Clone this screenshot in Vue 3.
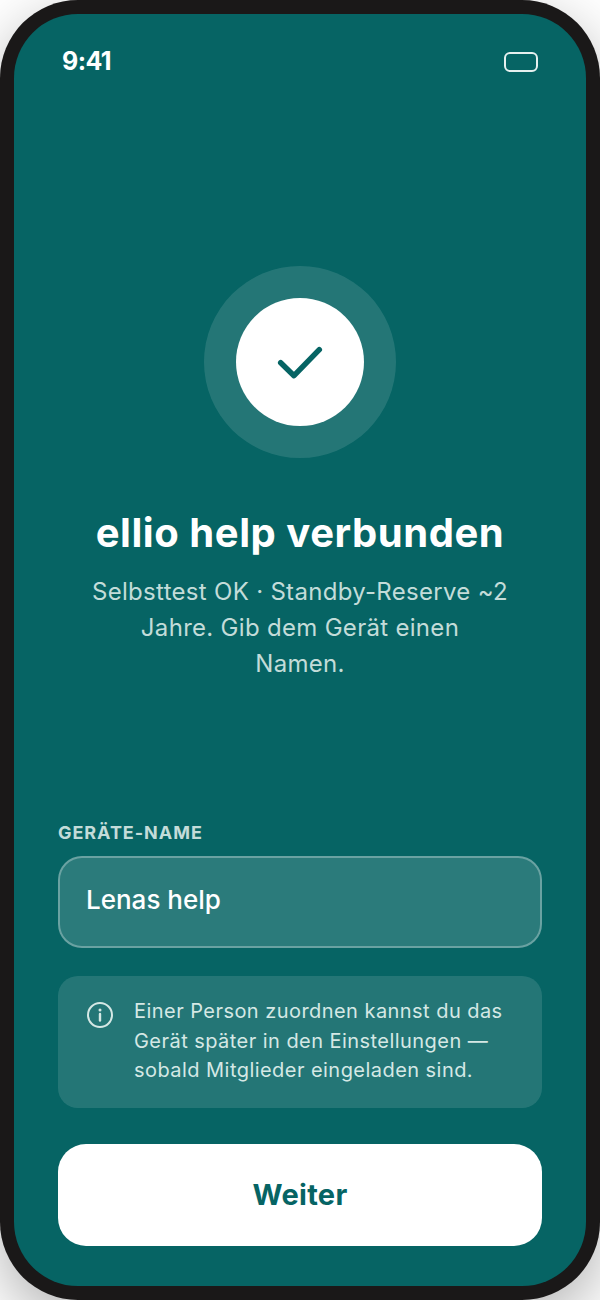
<script setup>
</script>

<template>
  <div class="phone">
    <main class="screen">
      <header class="status">
        <span class="time">9:41</span>
        <span class="battery"></span>
      </header>

      <section class="hero">
        <div class="ring">
          <div class="disc">
            <svg class="check" viewBox="0 0 48 48" width="48" height="48" fill="none">
              <path d="M4.7 24.7 18 37.7 43.3 11.7" stroke="#066464" stroke-width="5.5" stroke-linecap="round" stroke-linejoin="round"/>
            </svg>
          </div>
        </div>
        <h1 class="title">ellio help verbunden</h1>
        <p class="sub">Selbsttest OK · Standby-Reserve ~2<br>Jahre. Gib dem Gerät einen<br>Namen.</p>
      </section>

      <section class="form">
        <label class="label">GERÄTE-NAME</label>
        <div class="input">Lenas help</div>
        <div class="info">
          <svg class="info-icon" viewBox="0 0 26 26" width="26" height="26" fill="none">
            <circle cx="13" cy="13" r="12" stroke="#d5e8e5" stroke-width="2"/>
            <path d="M13 12v6.5" stroke="#d5e8e5" stroke-width="2.4" stroke-linecap="round"/>
            <circle cx="13" cy="8" r="1.5" fill="#d5e8e5"/>
          </svg>
          <p class="info-text">Einer Person zuordnen kannst du das<br>Gerät später in den Einstellungen —<br>sobald Mitglieder eingeladen sind.</p>
        </div>
        <button class="btn">Weiter</button>
      </section>
    </main>
  </div>
</template>

<style>
html, body { margin: 0; background: #fff; }
</style>

<style scoped>
.phone {
  box-sizing: border-box;
  width: 600px;
  height: 1300px;
  padding: 14px;
  background: #1a1818;
  border-radius: 78px;
  box-shadow: 0 20px 60px rgba(0, 0, 0, 0.3);
  font-family: Inter, "Liberation Sans", sans-serif;
}
.screen {
  height: 100%;
  background: #066464;
  border-radius: 64px;
  display: flex;
  flex-direction: column;
  padding: 34px 44px 40px;
  box-sizing: border-box;
  overflow: hidden;
}
.status {
  display: flex;
  justify-content: space-between;
  align-items: center;
  height: 26px;
  padding: 0 4px;
}
.time {
  color: #fff;
  font-size: 25px;
  font-weight: 700;
  line-height: 26px;
  letter-spacing: -0.6px;
}
.battery {
  box-sizing: border-box;
  width: 34px;
  height: 20px;
  margin-top: 2px;
  border: 2px solid #e6f0ef;
  border-radius: 6px;
}
.hero {
  margin-top: 192px;
  display: flex;
  flex-direction: column;
  align-items: center;
  text-align: center;
}
.ring {
  width: 192px;
  height: 192px;
  border-radius: 50%;
  background: rgba(255, 255, 255, 0.12);
  display: flex;
  align-items: center;
  justify-content: center;
}
.disc {
  width: 128px;
  height: 128px;
  border-radius: 50%;
  background: #fff;
  display: flex;
  align-items: center;
  justify-content: center;
}
.title {
  margin: 49px 0 0;
  color: #fff;
  font-size: 40px;
  font-weight: 700;
  line-height: 52px;
  letter-spacing: 0.55px;
}
.sub {
  margin: 15px 0 0;
  color: #c3dcd9;
  font-size: 24px;
  font-weight: 400;
  line-height: 36px;
  letter-spacing: 0.3px;
}
.form {
  margin-top: auto;
  display: flex;
  flex-direction: column;
}
.label {
  color: #c3dcd9;
  font-size: 18px;
  font-weight: 700;
  line-height: 24px;
  letter-spacing: 0.95px;
}
.input {
  box-sizing: border-box;
  margin-top: 11px;
  height: 92px;
  padding: 0 26px 5px;
  display: flex;
  align-items: center;
  border: 2px solid rgba(255, 255, 255, 0.3);
  border-radius: 24px;
  background: rgba(255, 255, 255, 0.15);
  color: #fff;
  font-size: 26px;
  font-weight: 500;
}
.info {
  box-sizing: border-box;
  margin-top: 28px;
  height: 132px;
  padding: 21px 28px 0 29px;
  display: flex;
  gap: 21px;
  border-radius: 20px;
  background: rgba(255, 255, 255, 0.12);
}
.info-icon {
  flex: none;
  margin-top: 5px;
}
.info-text {
  margin: 0;
  color: #d5e8e5;
  font-size: 20px;
  line-height: 29.5px;
  letter-spacing: 0.45px;
  white-space: nowrap;
}
.btn {
  margin-top: 36px;
  height: 102px;
  padding: 0 0 2px;
  border: 0;
  border-radius: 28px;
  background: #fff;
  color: #066464;
  font-family: inherit;
  font-size: 29px;
  font-weight: 700;
  letter-spacing: 0.3px;
}
</style>
